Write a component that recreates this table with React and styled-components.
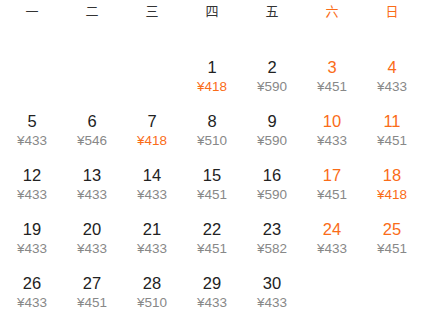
import React from "react";
import styled, { createGlobalStyle } from "styled-components";

const Global = createGlobalStyle`
  html, body { margin: 0; padding: 0; background: #fff; }
  body { font-family: "Liberation Sans", Arial, "Noto Sans CJK SC", sans-serif; }
`;

const ORANGE = "#fa6c18";

const Calendar = styled.div`
  width: 420px;
  padding: 0 0 0 2px;
`;

const WeekHeader = styled.div`
  display: grid;
  grid-template-columns: repeat(7, 60px);
  height: 22px;
  margin-bottom: 28px;
`;

const WeekDay = styled.div`
  text-align: center;
  font-size: 13px;
  line-height: 22px;
  color: ${(p) => (p.$weekend ? ORANGE : "#333")};
  font-family: "Noto Sans CJK SC", sans-serif;
`;

const Grid = styled.div`
  display: grid;
  grid-template-columns: repeat(7, 60px);
  grid-auto-rows: 54px;
`;

const Cell = styled.div`
  display: flex;
  flex-direction: column;
  align-items: center;
  padding-top: 7px;
`;

const DayNum = styled.div`
  font-size: 16.5px;
  line-height: 20px;
  color: ${(p) => (p.$weekend ? ORANGE : "#222")};
`;

const Price = styled.div`
  font-size: 13.5px;
  line-height: 20px;
  color: ${(p) => (p.$low ? ORANGE : "#888")};
`;

const weekDays = ["一", "二", "三", "四", "五", "六", "日"];

const prices = {
  1: 418, 2: 590, 3: 451, 4: 433,
  5: 433, 6: 546, 7: 418, 8: 510, 9: 590, 10: 433, 11: 451,
  12: 433, 13: 433, 14: 433, 15: 451, 16: 590, 17: 451, 18: 418,
  19: 433, 20: 433, 21: 433, 22: 451, 23: 582, 24: 433, 25: 451,
  26: 433, 27: 451, 28: 510, 29: 433, 30: 433,
};

const OFFSET = 3;

export default function App() {
  const cells = [];
  for (let i = 0; i < OFFSET; i++) cells.push(<Cell key={"e" + i} />);
  for (let d = 1; d <= 30; d++) {
    const col = (OFFSET + d - 1) % 7;
    const weekend = col >= 5;
    cells.push(
      <Cell key={d}>
        <DayNum $weekend={weekend}>{d}</DayNum>
        <Price $low={prices[d] === 418}>¥{prices[d]}</Price>
      </Cell>
    );
  }
  return (
    <>
      <Global />
      <Calendar>
        <WeekHeader>
          {weekDays.map((w, i) => (
            <WeekDay key={w} $weekend={i >= 5}>{w}</WeekDay>
          ))}
        </WeekHeader>
        <Grid>{cells}</Grid>
      </Calendar>
    </>
  );
}
